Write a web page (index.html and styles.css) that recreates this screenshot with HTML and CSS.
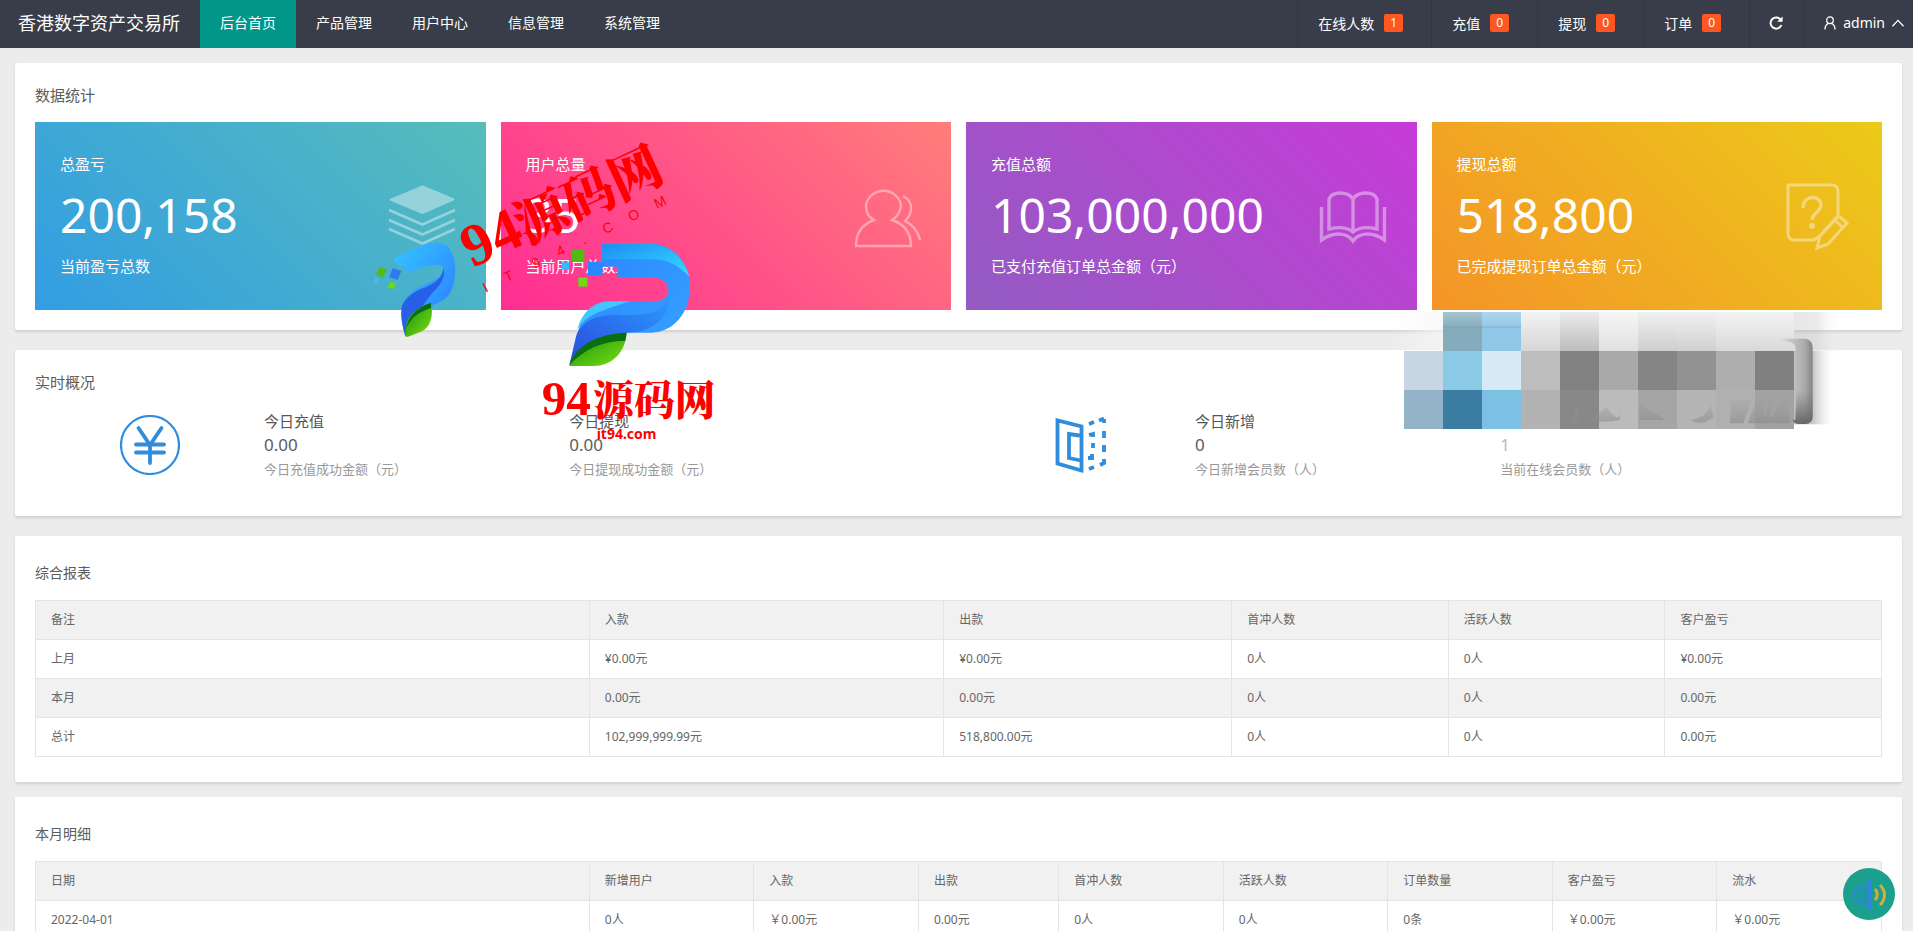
FILE: index.html
```html
<!DOCTYPE html>
<html lang="zh-CN">
<head>
<meta charset="utf-8">
<title>香港数字资产交易所</title>
<link rel="stylesheet" href="styles.css">
</head>
<body>
<header class="topbar">
  <a class="brand" href="#">香港数字资产交易所</a>
  <nav class="menu">
    <a class="menu-item active" href="#">后台首页</a>
    <a class="menu-item" href="#">产品管理</a>
    <a class="menu-item" href="#">用户中心</a>
    <a class="menu-item" href="#">信息管理</a>
    <a class="menu-item" href="#">系统管理</a>
  </nav>
  <div class="tools">
    <a class="tool" href="#">在线人数<span class="badge">1</span></a>
    <a class="tool" href="#">充值<span class="badge">0</span></a>
    <a class="tool" href="#">提现<span class="badge">0</span></a>
    <a class="tool" href="#">订单<span class="badge">0</span></a>
    <button class="tool refresh" type="button" aria-label="刷新">
      <svg width="16" height="16" viewBox="0 0 16 16"><path d="M13 5.2A5.6 5.6 0 1 0 13.4 10" fill="none" stroke="#fff" stroke-width="2"/><path d="M14.6 1.4v5.4H9.2z" fill="#fff"/></svg>
    </button>
    <button class="tool user" type="button">
      <svg width="12" height="14" viewBox="0 0 12 14" fill="none" stroke="#fff" stroke-width="1.3"><circle cx="6" cy="4.2" r="3.3"/><path d="M1 13.4C1 10 2.6 8.2 4.6 7.4M11 13.4C11 10 9.4 8.2 7.4 7.4"/></svg>
      <span>admin</span>
      <svg width="12" height="8" viewBox="0 0 12 8" fill="none" stroke="#fff" stroke-width="1.3"><path d="M.5 7.2 6 1.4l5.500 5.800"/></svg>
    </button>
  </div>
</header>

<main class="page">
  <section class="panel">
    <h2 class="heading">数据统计</h2>
    <div class="cards">
      <article class="card blue">
        <div><p class="card-label">总盈亏</p><p class="card-number">200,158</p><p class="card-label">当前盈亏总数</p></div>
        <svg class="card-icon" viewBox="0 0 70 70"><path d="M3 19 35 5.500a2 2 0 0 1 1 0L67 18.500a1.200 1.200 0 0 1 0 1.800L37 33.500a3 3 0 0 1-3 0L3 20.500a1 1 0 0 1 0-1.500z" fill="#fff"/><path d="M2 30 35.500 44.500 68 30M2 40 35.500 54.500 68 40M2 49 35.500 63.500 68 49" fill="none" stroke="#fff" stroke-width="2.600"/></svg>
      </article>
      <article class="card pink">
        <div><p class="card-label">用户总量</p><p class="card-number">35</p><p class="card-label">当前用户总数量</p></div>
        <svg class="card-icon" viewBox="0 0 70 70" fill="none" stroke="#fff" stroke-width="2.400"><path d="M22 40C15 36 14 31 14 24.500a18 18 0 0 1 35 0C49 31 46 36 40 40 52 44 59 52 59 66H4c0-14 7-22 18-26z"/><path d="M51 16c6 3 9 7 8 14-1 6-3 8-6 11 8 4 13 10 15 19"/></svg>
      </article>
      <article class="card purple">
        <div><p class="card-label">充值总额</p><p class="card-number">103,000,000</p><p class="card-label">已支付充值订单总金额（元）</p></div>
        <svg class="card-icon" viewBox="0 0 70 70" fill="none" stroke="#fff" stroke-width="3.400"><path d="M35 18v33M35 19C30 11 14 11 11 19v30c8-2 18-2 24 3 6-5 16-5 24-3V19C56 11 40 11 35 19"/><path d="M3.500 27v33c13-9 26-7 31.500 1 5.500-8 18.500-10 31.500-1V27"/></svg>
      </article>
      <article class="card orange">
        <div><p class="card-label">提现总额</p><p class="card-number">518,800</p><p class="card-label">已完成提现订单总金额（元）</p></div>
        <svg class="card-icon" viewBox="0 0 70 70" fill="none" stroke="#fff" stroke-width="3"><path d="M55 36V11a6 6 0 0 0-6-6H5v49a6 6 0 0 0 6 6h18c5 0 10-6 14-11 4-5 8-9 12-13"/><path d="m34 68 3-12 19-20 8 7-19 21-11 4zM52 40l8 8"/><path d="M20 28c0-14 18-13 18-3 0 7-9 8-9 15" stroke-width="3.400"/><circle cx="29" cy="46" r="1.500"/></svg>
      </article>
    </div>
  </section>

  <section class="panel">
    <h2 class="heading">实时概况</h2>
    <div class="live">
      <div class="live-group">
        <svg class="live-icon" viewBox="0 0 60 60" fill="none" stroke="#2f8ddb"><circle cx="30" cy="30" r="29" stroke-width="2.200"/><path d="M18.500 13 30 30 41.500 13M30 30v18M16 29.500h28M16 37.500h28" stroke-width="3.800" stroke-linecap="round"/></svg>
        <div class="live-item"><p class="live-label">今日充值</p><p class="live-value">0.00</p><p class="live-note">今日充值成功金额（元）</p></div>
        <div class="live-item"><p class="live-label">今日提现</p><p class="live-value">0.00</p><p class="live-note">今日提现成功金额（元）</p></div>
      </div>
      <div class="live-group">
        <svg class="live-icon" viewBox="0 0 60 60" fill="none" stroke="#2f8ddb" stroke-width="3.800"><path d="M6.500 5.500v43l24 7V11.500zM32 21l-14-2v24l14 3"/><path d="m38 9 5-2M48 5.500l5-2M53 4v4M53 16v7M53 30v7M53 44v4l-4 2M43 52l-5 2M38 20l4-1v3M42 28v5M37 43h4v-4"/></svg>
        <div class="live-item"><p class="live-label">今日新增</p><p class="live-value">0</p><p class="live-note">今日新增会员数（人）</p></div>
        <div class="live-item"><p class="live-value faded">1</p><p class="live-note">当前在线会员数（人）</p></div>
      </div>
    </div>
  </section>

  <section class="panel report">
    <h2 class="heading small">综合报表</h2>
    <table class="grid">
      <colgroup><col class="w-first"><col class="w-in"><col class="w-out"><col><col><col></colgroup>
      <thead><tr><th>备注</th><th>入款</th><th>出款</th><th>首冲人数</th><th>活跃人数</th><th>客户盈亏</th></tr></thead>
      <tbody>
        <tr><td>上月</td><td>¥0.00元</td><td>¥0.00元</td><td>0人</td><td>0人</td><td>¥0.00元</td></tr>
        <tr><td>本月</td><td>0.00元</td><td>0.00元</td><td>0人</td><td>0人</td><td>0.00元</td></tr>
        <tr><td>总计</td><td>102,999,999.99元</td><td>518,800.00元</td><td>0人</td><td>0人</td><td>0.00元</td></tr>
      </tbody>
    </table>
  </section>

  <section class="panel report">
    <h2 class="heading small">本月明细</h2>
    <table class="grid">
      <colgroup><col class="w-first"><col><col><col class="w-narrow"><col><col><col><col><col></colgroup>
      <thead><tr><th>日期</th><th>新增用户</th><th>入款</th><th>出款</th><th>首冲人数</th><th>活跃人数</th><th>订单数量</th><th>客户盈亏</th><th>流水</th></tr></thead>
      <tbody>
        <tr><td>2022-04-01</td><td>0人</td><td>￥0.00元</td><td>0.00元</td><td>0人</td><td>0人</td><td>0条</td><td>￥0.00元</td><td>￥0.00元</td></tr>
      </tbody>
    </table>
  </section>
</main>

<button class="sound" type="button" aria-label="声音">
  <svg width="36" height="40" viewBox="0 0 36 40" fill="none"><path d="M20 5v31L10 29H4V13h6z" fill="#1c98a4"/><path d="M17 9 9 14H5M17 33l-8-5H5M4 15v12" stroke="#2f86dc" stroke-width="2" stroke-dasharray="4 1"/><path d="M19 6v30" stroke="#2f86dc" stroke-width="4"/><path d="M24 15c3 3 3 8 0 11M29 11c6 6 6 14 0 20" stroke="#d8ac3a" stroke-width="3"/></svg>
</button>

<svg class="overlay mosaic" viewBox="0 0 1350 540" aria-hidden="true">
  <defs>
    <linearGradient id="fade" x2="0" y2="1"><stop offset="0" stop-color="#fff" stop-opacity=".7"/><stop offset="1" stop-color="#fff" stop-opacity="0"/></linearGradient>
    <linearGradient id="edge"><stop offset="0" stop-color="#b0b0b0"/><stop offset=".5" stop-color="#bbb"/><stop offset="1" stop-color="#eee" stop-opacity="0"/></linearGradient>
    <linearGradient id="mist"><stop offset="0" stop-color="#f6f6f6" stop-opacity="0"/><stop offset="1" stop-color="#f6f6f6" stop-opacity=".7"/></linearGradient>
    <linearGradient id="bar" x2="1" y2="0"><stop offset="0" stop-color="#efefef"/><stop offset=".4" stop-color="#c8c8c8"/><stop offset=".8" stop-color="#aaa"/><stop offset="1" stop-color="#858585"/></linearGradient>
    <linearGradient id="barend" x2="0" y2="1"><stop offset=".6" stop-color="#777" stop-opacity="0"/><stop offset="1" stop-color="#666"/></linearGradient>
    <linearGradient id="streak" x2="0" y2="1"><stop offset="0" stop-color="#aaa" stop-opacity="0"/><stop offset="1" stop-color="#888"/></linearGradient>
  </defs>
  <rect x="0" y="66" width="159" height="117" fill="url(#mist)"/>
  <rect x="159" y="66" width="117" height="117" fill="#84acbd"/><rect x="276" y="66" width="117" height="117" fill="#90c6e6"/>
  <rect x="393" y="66" width="117" height="117" fill="#d6d6d6"/><rect x="510" y="66" width="117" height="117" fill="#bdbdbd"/>
  <rect x="627" y="66" width="117" height="117" fill="#e0e0e0"/><rect x="744" y="66" width="117" height="117" fill="#cecece"/>
  <rect x="861" y="66" width="117" height="117" fill="#d0d0d0"/><rect x="978" y="66" width="234" height="117" fill="#d9d9d9"/>
  <rect x="1212" y="66" width="138" height="117" fill="url(#edge)" opacity=".3"/>
  <rect x="393" y="66" width="819" height="117" fill="url(#fade)"/><rect x="159" y="66" width="234" height="50" fill="url(#fade)" opacity=".4"/>
  <path d="M159 111h234" stroke="#759cac" stroke-width="4" opacity=".4"/>
  <rect x="42" y="183" width="117" height="117" fill="#c8d5e2"/><rect x="159" y="183" width="117" height="117" fill="#8acae5"/>
  <rect x="276" y="183" width="117" height="117" fill="#d5eaf4"/><rect x="393" y="183" width="117" height="117" fill="#bdbdbd"/>
  <rect x="510" y="183" width="117" height="117" fill="#818181"/><rect x="627" y="183" width="117" height="117" fill="#a9a9a9"/>
  <rect x="744" y="183" width="117" height="117" fill="#858585"/><rect x="861" y="183" width="117" height="117" fill="#929292"/>
  <rect x="978" y="183" width="117" height="117" fill="#aeaeae"/><rect x="1095" y="183" width="117" height="117" fill="#808080"/>
  <rect x="42" y="300" width="117" height="117" fill="#93b3c8"/><rect x="159" y="300" width="117" height="117" fill="#3b7ca2"/>
  <rect x="276" y="300" width="117" height="117" fill="#7cc0e4"/><rect x="393" y="300" width="117" height="117" fill="#b3b3b3"/>
  <rect x="510" y="300" width="117" height="117" fill="#888"/><rect x="627" y="300" width="117" height="117" fill="#bbb"/>
  <rect x="744" y="300" width="117" height="117" fill="#a5a5a5"/><rect x="861" y="300" width="117" height="117" fill="#b4b4b4"/>
  <rect x="978" y="300" width="117" height="117" fill="#b0b0b0"/><rect x="1095" y="300" width="117" height="117" fill="#a2a2a2"/>
  <rect x="1212" y="183" width="117" height="220" fill="url(#edge)" opacity=".8"/>
  <path d="M560 340q-10 60-50 60h60zM650 350q40 60 40 10v30q-50 10-90 0zM748 340l80 50h-80zM900 390q60-10 60-50l10 40q-30 30-70 10zM1025 330h60l-25 70h-40zM1075 395q30-90 50-90l-5 80 30-70-10 75 50-95 10 105h-125z" fill="url(#streak)" opacity=".6"/>
  <path d="M1150 146h96q22 4 22 26v206q0 24-24 24h-14q-20 0-24-14l10 2V168q-4-14-66-22z" fill="url(#bar)"/>
  <path d="M1226 146h20q22 4 22 26v206q0 24-24 24h-14q-20 0-24-14l10 2z" fill="url(#barend)"/>
</svg>

<svg class="overlay mark-small" viewBox="1080 360 420 360" aria-hidden="true">
  <defs>
    <linearGradient id="sa" x2="1" y2="1"><stop offset="0" stop-color="#36c6ff"/><stop offset="1" stop-color="#2a78ff"/></linearGradient>
    <linearGradient id="leaf" x2="1" y2="1"><stop offset="0" stop-color="#168c18"/><stop offset="1" stop-color="#7be20b"/></linearGradient>
  </defs>
  <path d="M1178 448Q1290 385 1330 402C1372 418 1374 500 1352 545 1325 600 1260 560 1217 680 1190 600 1208 560 1250 535 1290 512 1330 510 1330 470 1300 455 1250 480 1222 488L1212 465 1198 470z" fill="url(#sa)"/>
  <path d="M1205 590Q1220 550 1280 530 1330 510 1330 472 1340 510 1300 545 1260 590 1217 680 1200 630 1205 590z" fill="#285ee8"/>
  <path d="M1220 682Q1200 610 1293 578 1305 640 1266 664z" fill="url(#leaf)"/><path d="M1217 660q10-60 76-82v16q-60 18-76 66z" fill="#086c12"/>
  <path d="m1138 470 22 8-10 24-22-8z" fill="#52bd10"/><path d="m1172 515 16 6-8 17-17-6z" fill="#70d812"/><path d="m1178 474 26 8-11 28-25-8z" fill="#2f7cf2"/><path d="m1126 502 13 6-8 15-12-6z" fill="#4cb8ee"/>
</svg>

<svg class="overlay mark" viewBox="0 0 1560 1050" aria-label="94源码网 it94.com">
  <defs>
    <linearGradient id="top" x2="1" y2="1"><stop offset="0" stop-color="#1b8df5"/><stop offset="1" stop-color="#38dcff"/></linearGradient>
    <linearGradient id="arm" x2="1" y2="1"><stop offset="0" stop-color="#2b84ff"/><stop offset="1" stop-color="#36a4ff"/></linearGradient>
    <linearGradient id="tail" x1="1" x2="0" y2="1"><stop offset="0" stop-color="#2b9dff"/><stop offset="1" stop-color="#2a49dd"/></linearGradient>
  </defs>
  <g class="mark-text">
    <g transform="rotate(-25 85 480)"><text class="mark-digits big" x="98" y="480">94</text><text class="mark-han big" x="272" y="484">源码网</text></g>
    <g transform="rotate(-26 137 548)"><text class="mark-host thin" x="137 208 300 383 465 536 622 709" y="548">IT94.COM</text></g>
  </g>
  <path d="M486 402h150c66 0 114 60 114 130 0 76-50 136-116 136H560C500 680 450 700 388 766 402 720 410 660 428 630 450 590 480 574 510 574h130c36 0 50-20 44-42-6-20-24-30-54-30h-98v-32h-46z" fill="url(#arm)"/>
  <path d="M486 402h150c56 0 100 50 112 98-30-30-60-52-112-52H486z" fill="url(#top)"/>
  <path d="M412 660C424 610 460 574 510 574h60c-90 30-130 40-158 86z" fill="#42c6ff"/>
  <path d="M408 680c10-40 60-68 120-66 90 4 152 0 158-70 10 60-30 124-126 124C480 680 440 710 388 766z" fill="url(#tail)"/>
  <path d="M388 768c30-70 90-90 172-98-6 66-52 98-98 98z" fill="url(#leaf)"/>
  <path d="M388 766c20-60 80-94 172-98l-4 24c-70 2-124 24-168 74z" fill="#08700f"/>
  <path d="M395 420h38v36h-38z" fill="#4fbd10"/><path d="M415 503h27v27h-27z" fill="#70d915"/><path d="M444 456h44v40h-44z" fill="#2888ff"/><path d="M365 457h22v22h-22z" fill="#35b9ff"/>
  <g class="mark-text">
    <text class="mark-digits" x="305" y="915">94</text><text class="mark-han" x="460" y="915">源码网</text>
    <text class="mark-host" x="470" y="988">it94.com</text>
  </g>
</svg>
</body>
</html>
```

FILE: styles.css
```css
* { box-sizing: border-box; }
body {
  margin: 0;
  height: 100vh;
  overflow: hidden;
  position: relative;
  background: #ececec;
  color: #5c5c5c;
  font-family: "Noto Sans", "Noto Sans CJK SC", sans-serif;
  font-size: 14px;
}
p, h2 { margin: 0; font-weight: 400; }
a { color: inherit; text-decoration: none; }
button { font: inherit; border: 0; cursor: pointer; }

.topbar { display: flex; height: 48px; background: #393d49; color: #fff; }
.brand { width: 200px; padding-left: 18px; font-size: 18px; line-height: 46px; }
.menu { display: flex; }
.menu-item { padding: 0 20px; line-height: 46px; }
.menu-item.active { background: #009688; }
.tools { display: flex; margin-left: auto; }
.tool {
  display: flex;
  align-items: center;
  padding: 0 28px 3px 20px;
  border-left: 1px solid #333742;
  background: none;
  color: #fff;
  white-space: nowrap;
}
.badge {
  width: 19px;
  margin-left: 10px;
  border-radius: 2px;
  background: #ff5722;
  font-size: 12px;
  line-height: 18px;
  text-align: center;
}
.refresh { padding-right: 19px; padding-left: 18px; }
.user { gap: 7px; padding-right: 9px; }

.page { padding: 15px 11px 15px 15px; }
.panel {
  margin-bottom: 20px;
  padding: 20px;
  border-radius: 2px;
  background: #fff;
  box-shadow: 0 2px 3px rgba(0, 0, 0, .12);
}
.report { margin-bottom: 15px; padding: 25px 20px; }
.heading { margin-bottom: 15px; font-size: 15px; line-height: 24px; }
.heading.small { font-size: 14px; }

.cards { display: grid; grid-template-columns: repeat(4, 1fr); gap: 15px; }
.card {
  display: flex;
  align-items: center;
  justify-content: space-between;
  height: 188px;
  padding: 0 29px 2px 25px;
  color: #fff;
}
.blue { background: linear-gradient(45deg, #329de3, #56bdbb); }
.pink { background: linear-gradient(45deg, #ff2d94, #ff7e7a); }
.purple { background: linear-gradient(45deg, #925cc2, #c73bd8); }
.orange { background: linear-gradient(45deg, #f49428, #ecca19); }
.card-label { font-size: 15px; line-height: 24px; }
.card-number { margin: 8px 0; font-size: 48px; line-height: 62px; }
.card-icon { width: 70px; height: 70px; opacity: .4; }

.live { display: grid; grid-template-columns: 1fr 1fr; gap: 15px; padding-bottom: 15px; }
.live-group { display: grid; grid-template-columns: 3fr 4fr 4fr 1fr; align-items: end; }
.live-icon { width: 60px; height: 60px; justify-self: center; align-self: center; }
.live-label { color: #555; font-size: 15px; line-height: 24px; }
.live-value { font-size: 17px; line-height: 24px; }
.live-value.faded { color: #bbb; }
.live-note { color: #999; font-size: 13px; line-height: 24px; }

.grid { width: 100%; border-collapse: collapse; table-layout: fixed; color: #666; font-size: 12px; line-height: 18px; }
.grid th, .grid td { padding: 10px 15px; border: 1px solid #e4e4e4; font-weight: 400; text-align: left; }
.grid thead tr, .grid tbody tr:nth-child(even) { background: #f1f1f1; }
.w-first { width: 30%; }
.w-in { width: 19.2%; }
.w-out { width: 15.6%; }
.w-narrow { width: 7.6%; }

.sound {
  position: fixed;
  right: 18px;
  bottom: 11px;
  display: grid;
  place-items: center;
  width: 52px;
  height: 52px;
  padding: 0;
  border-radius: 50%;
  background: #1aa08c;
}

.overlay { position: absolute; pointer-events: none; }
.mosaic { left: 1390px; top: 290px; width: 450px; }
.mark-small { left: 360px; top: 230px; width: 140px; }
.mark { left: 440px; top: 110px; width: 520px; }
.mark-text { fill: #f00; }
.mark-digits { font: bold 148px "Liberation Serif", serif; }
.mark-digits.big { font-size: 180px; }
.mark-han { font: 900 122px "Noto Serif CJK SC", "Noto Sans CJK SC", sans-serif; }
.mark-han.big { font-size: 156px; }
.mark-host { font: bold 42px "Noto Sans", sans-serif; }
.mark-host.thin { font: 400 42px "Liberation Sans", sans-serif; }
```
